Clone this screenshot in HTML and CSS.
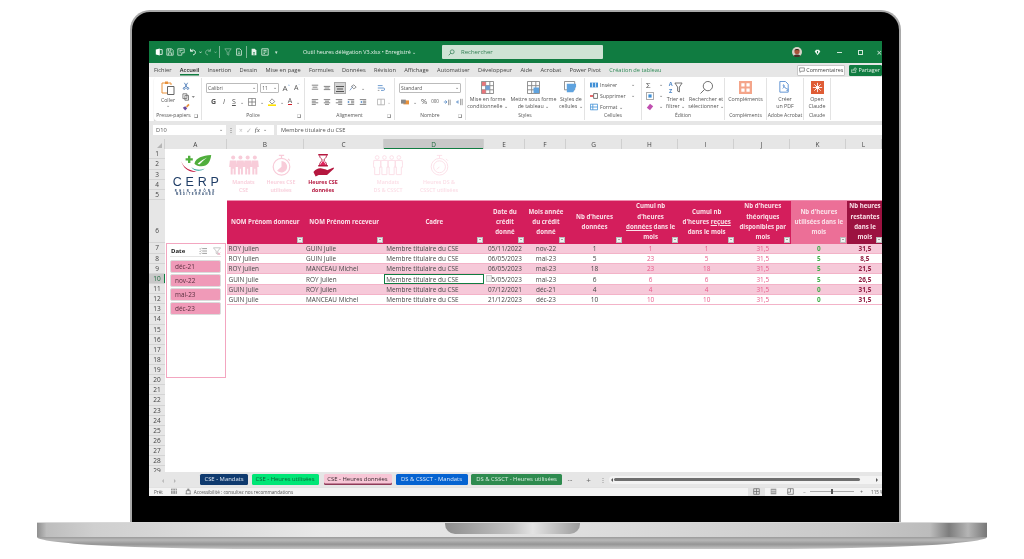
FILE: index.html
```html
<!DOCTYPE html>
<html lang="fr">
<head>
<meta charset="utf-8">
<title>Outil heures délégation V3</title>
<link rel="stylesheet" href="styles.css">
</head>
<body>
<svg class="defs" width="0" height="0" aria-hidden="true">
  <defs>
    <symbol id="persons" viewBox="0 0 36 24">
      <g fill="currentColor">
        <circle cx="5" cy="3" r="2.4"/><path d="M1 6.5h8l.8 8H8v9H5.6v-7h-1.2v7H2v-9H.2z"/>
        <circle cx="13.7" cy="3" r="2.4"/><path d="M9.7 6.5h8l.8 8h-1.8v9h-2.4v-7h-1.2v7h-2.4v-9H8.9z"/>
        <circle cx="22.4" cy="3" r="2.4"/><path d="M18.4 6.5h8l.8 8h-1.8v9H23v-7h-1.2v7h-2.4v-9h-1.8z"/>
        <circle cx="31" cy="3" r="2.4"/><path d="M27 6.5h8l.8 8H34v9h-2.4v-7h-1.2v7H28v-9h-1.8z"/>
      </g>
    </symbol>
    <symbol id="personsline" viewBox="0 0 36 24">
      <g fill="none" stroke="currentColor" stroke-width="1.1">
        <circle cx="5" cy="3" r="2.2"/><path d="M1 6.5h8l.8 8H8v9H2v-9H.2z"/>
        <circle cx="13.7" cy="3" r="2.2"/><path d="M9.7 6.5h8l.8 8h-1.8v9h-6v-9H8.9z"/>
        <circle cx="22.4" cy="3" r="2.2"/><path d="M18.4 6.5h8l.8 8h-1.8v9h-6v-9h-1.8z"/>
        <circle cx="31" cy="3" r="2.2"/><path d="M27 6.5h8l.8 8H34v9h-6v-9h-1.8z"/>
      </g>
    </symbol>
    <symbol id="watch" viewBox="0 0 24 26">
      <g fill="none" stroke="currentColor" stroke-width="1.4">
        <circle cx="12" cy="15" r="9.5"/>
        <path d="M9 2h6M12 2v3.5M19.5 6l2 2"/>
      </g>
      <path fill="currentColor" d="M12 8.5a6.5 6.5 0 1 1-5 10.7l5-4.2z"/>
    </symbol>
    <symbol id="watchline" viewBox="0 0 24 26">
      <g fill="none" stroke="currentColor" stroke-width="1">
        <circle cx="12" cy="15" r="9.5"/>
        <circle cx="12" cy="15" r="6.8"/>
        <path d="M9 2h6M12 2v3.5M19.5 6l2 2M12 15l-3 3"/>
      </g>
    </symbol>
    <symbol id="hourglass" viewBox="0 0 24 26">
      <path fill="#b5173f" d="M6 .5h11v1.600H6zM6 13h11v1.600H6z"/>
      <path fill="none" stroke="#b5173f" stroke-width="1" d="M7.500 2.100c0 3.500 3 3.600 3 5.200s-3 2-3 5.700M15.500 2.100c0 3.500-3 3.600-3 5.200s3 2 3 5.700"/>
      <path fill="#e0245e" d="M9 11.500 11.500 8 14 11.500 15 13H8z"/>
      <path fill="#b5173f" d="M.5 21c3-3.500 6-4.800 9.500-4l5 1c1.500.4 1.300 2-.2 2h-4l6-1.300 6-2.700c1-.3 1.500.8.700 1.500L16 24.500H6.500L3 26z"/>
    </symbol>
  </defs>
</svg>

<main class="laptop">
  <section class="lid">
    <div class="screen">

      <header class="titlebar">
        <div class="qat">
          <svg class="qi" viewBox="0 0 10 10"><path fill="#fff" d="M1 2l5-1.500v9L1 8z"/><path fill="none" stroke="#fff" d="M6 2h3v6H6"/></svg>
          <svg class="qi" viewBox="0 0 10 10"><path fill="none" stroke="#cfe6d8" d="M1 1h6l2 2v6H1zM3 1v3h3V1M3 9V6h4v3"/></svg>
          <svg class="qi" viewBox="0 0 10 10"><path fill="none" stroke="#cfe6d8" d="M1 1h8v5H6v3H1zM3 3h4M3 5h2"/></svg>
          <svg class="qi" viewBox="0 0 10 10"><path fill="none" stroke="#fff" stroke-width="1.100" d="M2 1v3h3M2 4c2-2.500 6-1.500 6 1.500 0 2-1.500 3-3 3"/></svg>
          <span class="caret">⌄</span>
          <svg class="qi dim" viewBox="0 0 10 10"><path fill="none" stroke="#7fb898" stroke-width="1.100" d="M8 1v3H5M8 4C6 1.500 2 2.500 2 5.500c0 2 1.500 3 3 3"/></svg>
          <span class="caret dimcaret">⌄</span>
          <i class="qsep"></i>
          <svg class="qi dim" viewBox="0 0 10 10"><path fill="none" stroke="#7fb898" d="M1 1h8L6 5v4L4 8V5z"/></svg>
          <svg class="qi" viewBox="0 0 10 10"><path fill="none" stroke="#e6f2ea" d="M2 1h4l2 2v6H2zM4 5h2M4 7h2"/></svg>
          <i class="qsep"></i>
          <svg class="qi" viewBox="0 0 10 10"><path fill="#e6f2ea" d="M2 1h4l2 2v6H2z"/><path fill="#107c41" d="M4 5h2v1H4zM4 7h2v1H4z"/></svg>
          <svg class="qi" viewBox="0 0 10 10"><path fill="none" stroke="#e6f2ea" d="M1 1h8v8H1zM3 3h4M3 5h4M3 7h2"/></svg>
          <span class="caret small">▾</span>
        </div>
        <div class="doc">Outil heures délégation V3.xlsx • Enregistré ⌄</div>
        <div class="search">
          <svg class="sicon" viewBox="0 0 10 10"><circle cx="6" cy="4" r="2.800" fill="none" stroke="#2f7d51"/><path d="M4 6 1 9" stroke="#2f7d51" stroke-width="1.100"/></svg>
          <span>Rechercher</span>
        </div>
        <div class="winctl">
          <svg class="avatar" viewBox="0 0 10 10"><circle cx="5" cy="5" r="5" fill="#d9d2c8"/><circle cx="5" cy="4.500" r="2.600" fill="#a8543a"/><path d="M1.500 9c1-2 6-2 7 0a5 5 0 0 1-7 0z" fill="#4a3028"/><path d="M2.500 3.500C3 1.500 7 1.500 7.500 3.500 6 2.800 4 2.800 2.500 3.500z" fill="#3a2a22"/></svg>
          <svg class="gem" viewBox="0 0 10 10"><path fill="#e9f4ee" d="M1 3.500 3 1h4l2 2.500L5 9z"/><path fill="#107c41" d="M4.300 3h1.400v3H4.300z"/></svg>
          <span class="minw"></span>
          <span class="maxw"></span>
          <span class="closew">×</span>
        </div>
      </header>

      <nav class="tabsrow">
        <span>Fichier</span><span class="on">Accueil</span><span>Insertion</span><span>Dessin</span><span>Mise en page</span><span>Formules</span><span>Données</span><span>Révision</span><span>Affichage</span><span>Automatiser</span><span>Développeur</span><span>Aide</span><span>Acrobat</span><span>Power Pivot</span><span class="ctx">Création de tableau</span>
        <div class="share">
          <button class="comm"><svg class="shi" viewBox="0 0 10 10"><path fill="none" stroke="#555" d="M1 1.500h8v5.500H4L2 9V7H1z"/></svg>Commentaires</button>
          <button class="part"><svg class="shi" viewBox="0 0 10 10"><path fill="none" stroke="#e6f2ea" d="M1 4v5h7V6M3 6c0-2.500 2-3.500 4-3.500V1l2.500 2.500L7 6V4.500C5 4.500 4 5 3 6z"/></svg>Partager</button>
        </div>
      </nav>

      <section class="ribbon">
        <div class="grp g-clip">
          <div class="gbody clip">
            <div class="big">
              <svg class="paste" viewBox="0 0 14 15"><path fill="none" stroke="#e8913a" d="M1 3h3M7 3h3v2M1 3v10h5"/><path fill="#e8913a" d="M4 1.500h3V4H4z"/><path fill="#fff" stroke="#666" d="M6.500 6.500H13v8H6.500z"/></svg>
              <span>Coller</span><span class="car">⌄</span>
            </div>
            <div class="tools">
              <svg class="ti" viewBox="0 0 10 10"><path fill="none" stroke="#3b6fb0" d="M3 1l3.500 6M7 1 3.500 7"/><circle cx="2.800" cy="8" r="1.200" fill="none" stroke="#3b6fb0"/><circle cx="7.200" cy="8" r="1.200" fill="none" stroke="#3b6fb0"/></svg>
              <svg class="ti wide" viewBox="0 0 16 10"><path fill="#fff" stroke="#666" d="M1 1h5v6H1zM3.500 3H8v6H3.500z"/><path fill="#666" d="M12 4h4l-2 2z"/></svg>
              <svg class="ti" viewBox="0 0 10 10"><path fill="#e8913a" d="M5 4l3-3 1.500 1.500-3 3z"/><path fill="#6b4a9b" d="M1 6l3-2 2.500 2.500L4 9.500z"/></svg>
            </div>
          </div>
          <div class="glabel lpad">Presse-papiers<i class="launch"></i></div>
        </div>

        <div class="grp g-font">
          <div class="gbody rows">
            <div class="r">
              <span class="combo c-font">Calibri<b>⌄</b></span>
              <span class="combo c-size">11<b>⌄</b></span>
              <span class="gl big-a">A<sup>^</sup></span><span class="gl big-a small-a">A<sup>ˇ</sup></span>
            </div>
            <div class="r r2 spread">
              <span class="gl strong">G</span><span class="gl it">I</span><span class="gl un">S</span><span class="car">⌄</span>
              <svg class="ti" viewBox="0 0 10 10"><path fill="none" stroke="#777" d="M.5.500h9v9h-9zM5 .500v9M.5 5h9"/></svg><span class="car">⌄</span>
              <svg class="ti" viewBox="0 0 10 10"><path fill="none" stroke="#777" d="M5 1 8.500 4.500 5 7.500 2 4.500z"/><path fill="#ffe100" d="M0 8h10v2H0z"/></svg><span class="car">⌄</span>
              <span class="gl colA">A</span><span class="car">⌄</span>
            </div>
          </div>
          <div class="glabel">Police<i class="launch"></i></div>
        </div>

        <div class="grp g-align">
          <div class="gbody alignb">
            <div class="rows">
              <div class="r spread">
                <svg class="ti lines" viewBox="0 0 10 10"><path d="M1 1.500h8M2 4h6M1 6.500h8" stroke="#666"/></svg>
                <svg class="ti lines" viewBox="0 0 10 10"><path d="M1 3h8M2 5h6M1 7h8" stroke="#666"/></svg>
                <svg class="ti lines act" viewBox="0 0 10 10"><path d="M1 3.500h8M2 6h6M1 8.500h8" stroke="#555"/></svg>
                <svg class="ti" viewBox="0 0 10 10"><path d="M1 8 5 3" stroke="#6b8fc0"/><path d="M3 3 6 1l3 3-3 2z" fill="none" stroke="#777"/></svg><span class="car">⌄</span>
              </div>
              <div class="r r2 spread">
                <svg class="ti lines" viewBox="0 0 10 10"><path d="M1 2h8M1 4h5M1 6h8M1 8h5" stroke="#666"/></svg>
                <svg class="ti lines" viewBox="0 0 10 10"><path d="M1 2h8M2.500 4h5M1 6h8M2.500 8h5" stroke="#666"/></svg>
                <svg class="ti lines" viewBox="0 0 10 10"><path d="M1 2h8M4 4h5M1 6h8M4 8h5" stroke="#666"/></svg>
                <svg class="ti lines" viewBox="0 0 10 10"><path d="M1 2h8M5 4h4M5 6h4M1 8h8" stroke="#666"/><path d="M1 3.500 3.500 5 1 6.500z" fill="#4b84c4"/></svg>
                <svg class="ti lines" viewBox="0 0 10 10"><path d="M1 2h8M5 4h4M5 6h4M1 8h8" stroke="#666"/><path d="M4 3.500 1.500 5 4 6.500z" fill="#4b84c4"/></svg>
              </div>
            </div>
            <div class="rows side">
              <div class="r"><svg class="ti" viewBox="0 0 10 10"><path d="M1 2h6M1 5h7a1.500 1.500 0 0 1 0 3H5" fill="none" stroke="#4b84c4"/><path d="M1 8h2" stroke="#888"/></svg></div>
              <div class="r r2"><svg class="ti" viewBox="0 0 10 10"><path fill="none" stroke="#aaa" d="M.5 1.500h9v7h-9zM5 1.500v7"/></svg><span class="car dimc">⌄</span></div>
            </div>
          </div>
          <div class="glabel">Alignement<i class="launch"></i></div>
        </div>

        <div class="grp g-num">
          <div class="gbody rows">
            <div class="r"><span class="combo c-num">Standard<b>⌄</b></span></div>
            <div class="r r2 spread">
              <svg class="ti" viewBox="0 0 10 10"><path fill="#e8913a" d="M3 3h7v5H3z"/><path fill="#888" d="M0 2h6v5H0z"/></svg><span class="car">⌄</span>
              <span class="gl pct">%</span>
              <span class="gl k000">000</span>
              <svg class="ti" viewBox="0 0 10 10"><path d="M1 5h3M3 3l2 2-2 2" fill="none" stroke="#4b84c4"/><path d="M7 2v7M9 2v7" stroke="#888"/></svg>
              <svg class="ti" viewBox="0 0 10 10"><path d="M5 5H2M4 3 2 5l2 2" fill="none" stroke="#4b84c4"/><path d="M7 1v8M9 1v8" stroke="#888"/></svg>
            </div>
          </div>
          <div class="glabel">Nombre<i class="launch"></i></div>
        </div>

        <div class="grp g-style">
          <div class="gbody cols3">
            <div class="btn w-a">
              <svg class="large" viewBox="0 0 14 14"><path fill="#fff" stroke="#888" d="M.5.500h13v13H.5zM5 .500v13M9.500.500v13M.5 5h13M.5 9.500h13"/><path fill="#e9757a" d="M1 1h4v4H1zM1 9.500h4v4H1z"/><path fill="#6f9fd6" d="M5 5h4.500v4.500H5z"/></svg>
              <span>Mise en forme<br>conditionnelle ⌄</span>
            </div>
            <div class="btn w-b">
              <svg class="large" viewBox="0 0 14 14"><path fill="#fff" stroke="#888" d="M.5.500h13v13H.5zM5 .500v13M9.500.500v13M.5 5h13M.5 9.500h13"/><path fill="#5fa3df" d="M7 7h6v6H7z"/></svg>
              <span>Mettre sous forme<br>de tableau ⌄</span>
            </div>
            <div class="btn w-c">
              <svg class="large" viewBox="0 0 14 14"><path fill="#fff" stroke="#888" d="M.5.500h11v9H.5z"/><path fill="#5fa3df" d="M3 3h10v3l-3 6H3z"/></svg>
              <span>Styles de<br>cellules ⌄</span>
            </div>
          </div>
          <div class="glabel">Styles</div>
        </div>

        <div class="grp g-cell">
          <div class="gbody stack">
            <div class="li"><svg class="ti" viewBox="0 0 10 10"><path fill="#3f8fd6" d="M0 2h10v6H0z"/><path d="M3 2v6M7 2v6" stroke="#fff"/></svg>Insérer<b>⌄</b></div>
            <div class="li"><svg class="ti" viewBox="0 0 10 10"><path fill="#e0464a" d="M0 4h4v2H0z"/><path fill="none" stroke="#555" d="M4.500 2h5v6h-5z"/></svg>Supprimer<b>⌄</b></div>
            <div class="li"><svg class="ti" viewBox="0 0 10 10"><path fill="none" stroke="#3f8fd6" d="M.5 1.500h9v7h-9zM3.500 1.500v7M.5 5h9"/></svg>Format ⌄</div>
          </div>
          <div class="glabel">Cellules</div>
        </div>

        <div class="grp g-edit">
          <div class="gbody editb">
            <div class="stack s2">
              <div class="li"><span class="sigma">Σ</span><b>⌄</b></div>
              <div class="li"><svg class="ti" viewBox="0 0 10 10"><path fill="#fff" stroke="#888" d="M.5.500h9v9h-9z"/><path fill="#3f8fd6" d="M3 3h4v4H3z"/></svg><b>⌄</b></div>
              <div class="li"><svg class="ti" viewBox="0 0 10 10"><path fill="#c04fb0" d="M1 6l4-5 4 3-4 5z"/></svg><b>⌄</b></div>
            </div>
            <div class="btn w-d">
              <div class="sortic"><span class="az">A<br>Z</span><svg class="funnel" viewBox="0 0 10 12"><path d="M1 1h8L6 5.500V11L4 10V5.500z" fill="none" stroke="#666"/></svg></div>
              <span>Trier et<br>filtrer ⌄</span>
            </div>
            <div class="btn w-e">
              <svg class="large" viewBox="0 0 14 14"><circle cx="8.500" cy="5.500" r="5" fill="none" stroke="#666"/><path d="M5 9 .5 13.500" stroke="#666"/></svg>
              <span>Rechercher et<br>sélectionner ⌄</span>
            </div>
          </div>
          <div class="glabel">Édition</div>
        </div>

        <div class="grp g-comp">
          <div class="gbody cols3">
            <div class="btn">
              <svg class="large" viewBox="0 0 14 14"><path fill="#f4a58a" d="M0 0h14v14H0z"/><path fill="#fff" d="M2.500 2.500h3.500v3.500H2.500zM8 2.500h3.500v3.500H8zM2.500 8h3.500v3.500H2.500zM8 8h3.500v3.500H8z"/></svg>
              <span>Compléments</span>
            </div>
          </div>
          <div class="glabel">Compléments</div>
        </div>

        <div class="grp g-pdf">
          <div class="gbody cols3">
            <div class="btn">
              <svg class="large" viewBox="0 0 14 14"><path fill="#fff" stroke="#5a8fd0" d="M2 .5h6l3 3V12H2z"/><path fill="none" stroke="#5a8fd0" d="M5 8c2-1 2-4 1-4s0 3 3 4 2 3 0 2"/></svg>
              <span>Créer<br>un PDF</span>
            </div>
          </div>
          <div class="glabel">Adobe Acrobat</div>
        </div>

        <div class="grp g-claude">
          <div class="gbody cols3">
            <div class="btn">
              <svg class="large" viewBox="0 0 14 14"><path fill="#df5c35" d="M0 0h14v14H0z"/><g stroke="#fff" stroke-width=".9"><path d="M7 2v10M2 7h10M3.500 3.500l7 7M10.500 3.500l-7 7"/></g><circle cx="7" cy="7" r="2" fill="#fff"/></svg>
              <span>Open<br>Claude</span>
            </div>
          </div>
          <div class="glabel">Claude</div>
        </div>
      </section>

      <div class="formula">
        <div class="namebox">D10<b>⌄</b></div>
        <span class="dots">⋮</span>
        <div class="fxbox"><span class="fxx">×</span><span class="fxx">✓</span><em>fx</em><b>⌄</b></div>
        <div class="finput">Membre titulaire du CSE</div>
      </div>

      <div class="colheads">
        <div class="corner"><i></i></div>
        <div class="ch a">A</div><div class="ch b">B</div><div class="ch c">C</div><div class="ch d sel">D</div><div class="ch e">E</div><div class="ch f">F</div><div class="ch g">G</div><div class="ch h">H</div><div class="ch i">I</div><div class="ch j">J</div><div class="ch k">K</div><div class="ch l">L</div>
      </div>

      <div class="sheet">
        <div class="rownums">
          <div>1</div><div>2</div><div>3</div><div>4</div><div>5</div><div class="tall">6</div><div>7</div><div>8</div><div>9</div><div class="sel">10</div><div>11</div><div>12</div><div>13</div><div>14</div><div>15</div><div>16</div><div>17</div><div>18</div><div>19</div><div>20</div><div>21</div><div>22</div><div>23</div><div>24</div><div>25</div><div>26</div><div>27</div><div>28</div><div>29</div>
        </div>

        <div class="cola">
          <div class="logo">
            <svg class="logomark" viewBox="0 0 40 24">
              <path fill="#4fae3c" d="M18 13c2-8 10-10 21-11-1 9-5 15-14 14-3 0-5-1-7-3z"/>
              <path fill="#fff" d="M22 13c4-4 8-6 12-8-4 3-7 6-10 9z"/>
              <path fill="#4fae3c" d="M10 3h3v3h3v3h-3v3h-3V9H7V6h3z"/>
              <path fill="#c61f45" d="M1 8c2 8 8 13 20 15-9 1-17-3-20-15z"/>
              <path fill="#2fa39a" d="M14 17c3 3 10 5 17 2-5 4-13 4-17-2z"/>
            </svg>
            <div class="cerp">CERP</div>
            <div class="cerpsub one">RHIN RHÔNE</div>
            <div class="cerpsub two">MÉDITERRANÉE</div>
          </div>
          <aside class="slicer">
            <div class="slhead">
              <strong>Date</strong>
              <svg class="slicon" viewBox="0 0 10 10"><path d="M4 2h6M4 5h6M4 8h6" stroke="#888"/><path d="M.5 2l1 1L3 1M.5 5l1 1L3 4M.5 8l1 1L3 7" fill="none" stroke="#888" stroke-width=".7"/></svg>
              <svg class="slicon" viewBox="0 0 10 10"><path d="M.5 1h9L6 5v4L4 8V5z" fill="none" stroke="#bbb"/><path d="M6 7l3 3M9 7l-3 3" stroke="#e9a0b8"/></svg>
            </div>
            <div class="slbtn">déc-21</div>
            <div class="slbtn">nov-22</div>
            <div class="slbtn">mai-23</div>
            <div class="slbtn">déc-23</div>
          </aside>
        </div>

        <div class="main">
          <div class="banner">
            <div class="bi"><svg class="ic ic-w pale" aria-hidden="true"><use href="#persons"/></svg><span class="pale">Mandats<br>CSE</span></div>
            <div class="bi"><svg class="ic pale" aria-hidden="true"><use href="#watch"/></svg><span class="pale">Heures CSE<br>utilisées</span></div>
            <div class="bi"><svg class="ic" aria-hidden="true"><use href="#hourglass"/></svg><span class="act">Heures CSE<br>données</span></div>
            <div class="bi far"><svg class="ic ic-w pale2" aria-hidden="true"><use href="#personsline"/></svg><span class="pale2">Mandats<br>DS &amp; CSSCT</span></div>
            <div class="bi"><svg class="ic pale2" aria-hidden="true"><use href="#watchline"/></svg><span class="pale2">Heures DS &amp;<br>CSSCT utilisées</span></div>
          </div>

          <table class="data">
            <colgroup>
              <col class="w-b1"><col class="w-c1"><col class="w-d1"><col class="w-e1"><col class="w-f1"><col class="w-n"><col class="w-n"><col class="w-n"><col class="w-n"><col class="w-n"><col class="w-l1">
            </colgroup>
            <thead>
              <tr>
                <th>NOM Prénom donneur<i class="fb"></i></th>
                <th>NOM Prénom receveur<i class="fb"></i></th>
                <th>Cadre<i class="fb"></i></th>
                <th>Date du<br>crédit<br>donné<i class="fb"></i></th>
                <th>Mois année<br>du crédit<br>donné<i class="fb"></i></th>
                <th>Nb d'heures<br>données<i class="fb"></i></th>
                <th>Cumul nb<br>d'heures<br><u>données</u> dans le<br>mois<i class="fb"></i></th>
                <th>Cumul nb<br>d'heures <u>reçues</u><br>dans le mois<i class="fb"></i></th>
                <th>Nb d'heures<br>théoriques<br>disponibles par<br>mois<i class="fb"></i></th>
                <th class="hk">Nb d'heures<br>utilisées dans le<br>mois<i class="fb"></i></th>
                <th class="hl">Nb heures<br>restantes<br>dans le<br>mois<i class="fb"></i></th>
              </tr>
            </thead>
            <tbody>
              <tr><td>ROY Julien</td><td>GUIN Julie</td><td>Membre titulaire du CSE</td><td class="ctr">05/11/2022</td><td class="ctr">nov-22</td><td class="ctr num">1</td><td class="ctr pk">1</td><td class="ctr pk">1</td><td class="ctr pk">31,5</td><td class="ctr gr">0</td><td class="ctr rs">31,5</td></tr>
              <tr><td>ROY Julien</td><td>GUIN Julie</td><td>Membre titulaire du CSE</td><td class="ctr">06/05/2023</td><td class="ctr">mai-23</td><td class="ctr num">5</td><td class="ctr pk">23</td><td class="ctr pk">5</td><td class="ctr pk">31,5</td><td class="ctr gr">5</td><td class="ctr rs">8,5</td></tr>
              <tr><td>ROY Julien</td><td>MANCEAU Michel</td><td>Membre titulaire du CSE</td><td class="ctr">06/05/2023</td><td class="ctr">mai-23</td><td class="ctr num">18</td><td class="ctr pk">23</td><td class="ctr pk">18</td><td class="ctr pk">31,5</td><td class="ctr gr">5</td><td class="ctr rs">21,5</td></tr>
              <tr><td>GUIN Julie</td><td>ROY Julien</td><td class="active">Membre titulaire du CSE</td><td class="ctr dropcell">05/05/2023<i class="dd"></i></td><td class="ctr">mai-23</td><td class="ctr num">6</td><td class="ctr pk">6</td><td class="ctr pk">6</td><td class="ctr pk">31,5</td><td class="ctr gr">5</td><td class="ctr rs">26,5</td></tr>
              <tr><td>GUIN Julie</td><td>ROY Julien</td><td>Membre titulaire du CSE</td><td class="ctr">07/12/2021</td><td class="ctr">déc-21</td><td class="ctr num">4</td><td class="ctr pk">4</td><td class="ctr pk">4</td><td class="ctr pk">31,5</td><td class="ctr gr">0</td><td class="ctr rs">31,5</td></tr>
              <tr><td>GUIN Julie</td><td>MANCEAU Michel</td><td>Membre titulaire du CSE</td><td class="ctr">21/12/2023</td><td class="ctr">déc-23</td><td class="ctr num">10</td><td class="ctr pk">10</td><td class="ctr pk">10</td><td class="ctr pk">31,5</td><td class="ctr gr">0</td><td class="ctr rs">31,5</td></tr>
            </tbody>
          </table>
        </div>
      </div>

      <div class="sheettabs">
        <div class="tabnav"><span>‹</span><span>›</span></div>
        <div class="tab navy">CSE - Mandats</div>
        <div class="tab mint">CSE - Heures utilisées</div>
        <div class="tab cur">CSE - Heures données</div>
        <div class="tab blue">DS &amp; CSSCT - Mandats</div>
        <div class="tab dgreen">DS &amp; CSSCT - Heures utilisées</div>
        <span class="more">···</span>
        <span class="plus">+</span>
        <span class="vd">⋮</span>
        <div class="hscroll"><i class="arr l"></i><i class="thumb"></i><i class="arr r"></i></div>
      </div>

      <footer class="status">
        <span>Prêt</span>
        <svg class="st" viewBox="0 0 10 10"><path fill="#999" d="M0 1h10v8H0z"/><path stroke="#eee" d="M0 4h10M3 1v8M7 1v8"/></svg>
        <svg class="st" viewBox="0 0 10 10"><path fill="none" stroke="#666" d="M1 9h8M2 9V4h6v5M5 1v3M3 2h4"/></svg>
        <span class="acc">Accessibilité : consultez nos recommandations</span>
        <div class="views">
          <span class="vw on"><svg viewBox="0 0 10 10"><path fill="none" stroke="#666" d="M1 1h8v8H1zM1 5h8M5 1v8"/></svg></span>
          <span class="vw"><svg viewBox="0 0 10 10"><path fill="#999" d="M1 1h8v8H1z"/><path stroke="#eee" d="M2 3.500h6M2 6h6"/></svg></span>
          <span class="vw"><svg viewBox="0 0 10 10"><path fill="none" stroke="#666" d="M1 1h8v8H1zM1 6h4V1"/></svg></span>
          <span class="zm">−</span>
          <span class="zoomline"><i></i></span>
          <span class="zm">+</span>
          <span class="pctz">115 %</span>
        </div>
      </footer>
    </div>
  </section>

  <section class="base">
    <div class="deck"><div class="notch"></div></div>
    <div class="lip"></div>
  </section>
</main>
</body>
</html>
```

FILE: styles.css
```css
* { box-sizing: border-box; }
html, body { margin: 0; padding: 0; background: #fff; }
body { width: 1024px; height: 559px; overflow: hidden; font-family: "Open Sans", "Noto Sans", sans-serif; color: #444; }
.defs { display: block; height: 0; }

.laptop { display: flex; flex-direction: column; align-items: flex-start; padding-top: 10px; }

/* lid */
.lid {
  width: 771px; height: 512px; margin-left: 130px; background: #000;
  border: 2px solid #a9a9a9; border-bottom: 0; border-radius: 20px 20px 0 0;
  padding: 29px 17px 26px 17px;
}
.screen { width: 733px; height: 455px; background: #fff; display: flex; flex-direction: column; overflow: hidden; filter: blur(.4px); }

/* title bar */
.titlebar { flex: 0 0 22px; background: #107c41; display: flex; align-items: center; color: #e6f2ea; font-size: 5.4px; padding-left: 6px; }
.qat { display: flex; align-items: center; gap: 3.2px; width: 149px; }
.qi { width: 8px; height: 8px; flex: none; }
.caret { font-size: 6px; width: 3px; color: #cfe6d8; margin: -3px 0 0 -2px; }
.dimcaret { color: #7fb898; }
.caret.small { margin: 0 0 0 3px; font-size: 5px; }
.qsep { width: 1px; height: 12px; background: #7fb898; flex: none; }
.doc { width: 140px; white-space: nowrap; }
.search { width: 162px; height: 14px; background: #cfe3d5; border-radius: 1px; display: flex; align-items: center; gap: 6px; padding-left: 6px; color: #2f7d51; font-size: 6px; }
.sicon { width: 7px; height: 7px; }
.winctl { flex: 1; display: flex; align-items: center; padding-left: 189px; }
.avatar { width: 10px; height: 10px; flex: none; }
.gem { width: 7px; height: 7px; flex: none; margin-left: 12px; }
.minw { width: 5px; height: 1px; background: #cfe6d8; margin-left: 16px; flex: none; }
.maxw { width: 5px; height: 5px; border: 1px solid #cfe6d8; margin-left: 16px; flex: none; }
.closew { margin-left: 14px; font-size: 9px; color: #cfe6d8; line-height: 1; }

/* ribbon tabs */
.tabsrow { flex: 0 0 14px; background: #e6e6e6; display: flex; align-items: center; gap: 8.300px; padding-left: 5px; font-size: 5.7px; color: #444; white-space: nowrap; }
.tabsrow .on { color: #222; box-shadow: 0 1.5px 0 #107c41; font-weight: 600; }
.tabsrow .ctx { color: #2e8b57; }
.share { margin-left: auto; display: flex; gap: 4px; height: 11px; }
.share button { font: inherit; font-size: 5.4px; padding: 0; border: 1px solid #c8c8c8; background: #fff; color: #444; border-radius: 1px; display: flex; align-items: center; justify-content: center; gap: 1.5px; }
.shi { width: 6px; height: 6px; flex: none; }
.comm { width: 48px; }
.share .part { width: 33px; background: #107c41; border-color: #107c41; color: #e6f2ea; }

/* ribbon */
.ribbon { flex: 0 0 44px; margin-left: 5px; background: #fff; border-radius: 3px 0 0 3px; display: flex; font-size: 5.2px; color: #555; box-shadow: 0 1px 1px #bbb; }
.grp { display: flex; flex-direction: column; border-right: 1px solid #e3e3e3; margin: 1px 0; }
.g-clip { width: 48px; } .g-font { width: 103px; } .g-align { width: 90px; } .g-num { width: 71px; } .g-style { width: 119px; }
.g-cell { width: 57px; } .g-edit { width: 83px; } .g-comp { width: 42px; } .g-pdf { width: 37px; } .g-claude { width: 27px; }
.gbody { flex: 1; min-height: 0; display: flex; }
.glabel { flex: 0 0 9px; text-align: center; font-size: 5px; color: #555; position: relative; line-height: 9px; white-space: nowrap; }
.lpad { padding-right: 8px; }
.launch { position: absolute; right: 3px; top: 2.5px; width: 4px; height: 4px; border: 1px solid #999; border-top-color: #ddd; border-left-color: #ddd; }

.clip { padding: 2px 0 0 6px; gap: 6px; }
.big { display: flex; flex-direction: column; align-items: center; width: 16px; line-height: 1; }
.paste { width: 14px; height: 15px; margin-bottom: 3px; }
.big .car { font-size: 5px; }
.tools { display: flex; flex-direction: column; gap: 2.5px; padding-top: 2px; }
.ti { width: 8px; height: 8px; flex: none; }
.ti.wide { width: 13px; }
.car { font-size: 5px; color: #666; }
.dimc { color: #bbb; }

.rows { display: flex; flex-direction: column; padding: 4px 4px 0 4px; gap: 0; flex: 1; }
.r { display: flex; align-items: center; gap: 2px; height: 11px; }
.r2 { margin-top: 3px; }
.spread { gap: 4px; padding-left: 2px; }
.combo { height: 10px; border: 1px solid #bbb; border-radius: 1px; display: flex; align-items: center; justify-content: space-between; padding: 0 1px; font-size: 5px; background: #fff; }
.combo b { font-weight: 400; font-size: 5px; margin-top: -2px; }
.c-font { width: 54px; } .c-size { width: 19px; } .c-num { width: 64px; }
.gl { font-size: 7px; color: #555; line-height: 1; }
.big-a { font-size: 8px; margin-left: 2px; }
.big-a sup { font-size: 4px; color: #4b84c4; }
.small-a { font-size: 7px; }
.strong { font-weight: 700; margin-left: 3px; }
.it { font-style: italic; margin-left: 3px; }
.un { text-decoration: underline; margin-left: 3px; }
.colA { border-bottom: 1.5px solid #d21f2b; font-size: 7px; line-height: .95; }
.pct { font-size: 7.5px; } .k000 { font-size: 4.5px; }

.alignb { display: flex; }
.alignb > .rows { flex: none; width: 68px; }
.alignb > .side { width: 20px; }
.lines.act { background: #d4d4d4; outline: 1px solid #a9a9a9; width: 10px; height: 10px; }

.cols3 { justify-content: space-around; flex: 1; }
.btn { display: flex; flex-direction: column; align-items: center; text-align: center; line-height: 7px; font-size: 5.3px; padding-top: 3px; white-space: nowrap; }
.large { width: 13px; height: 13px; margin-bottom: 2px; flex: none; }
.sortic { display: flex; align-items: center; gap: 1px; height: 13px; margin-bottom: 2px; }
.az { font-size: 5.6px; line-height: 6.4px; font-weight: 700; color: #4b84c4; }
.funnel { width: 9px; height: 11px; }
.stack { display: flex; flex-direction: column; gap: 3.4px; padding: 2.5px 0 0 5px; flex: 1; }
.li { display: flex; align-items: center; gap: 2px; height: 8px; font-size: 5.2px; }
.li b { font-weight: 400; margin: -2px 0 0 auto; padding-right: 6px; }
.editb { display: flex; }
.s2 { flex: none; width: 21px; padding-left: 4px; }
.s2 .li b { padding-right: 0; }
.sigma { font-size: 8px; line-height: 1; }
.w-d { width: 26px; } .w-e { width: 37px; }

/* formula bar */
.formula { flex: 0 0 18px; background: #e6e6e6; display: flex; align-items: flex-start; padding: 4px 0 0 4px; font-size: 5.7px; color: #555; margin-top: 0; }
.namebox { width: 73px; height: 10px; background: #fff; display: flex; justify-content: space-between; align-items: center; padding: 0 3px; }
.namebox b, .fxbox b { font-weight: 400; font-size: 5px; margin-top: -2px; }
.dots { width: 10px; text-align: center; line-height: 10px; }
.fxbox { width: 38px; height: 10px; background: #fff; display: flex; align-items: center; gap: 3px; padding: 0 3px; }
.fxx { color: #bbb; font-size: 6.5px; }
.fxbox em { font-family: "Liberation Serif", serif; font-size: 7px; }
.finput { flex: 1; height: 10px; background: #fff; margin-left: 3px; padding-left: 4px; line-height: 10px; }

/* column headers */
.colheads { flex: 0 0 10px; display: flex; background: #e6e6e6; font-size: 6.5px; color: #444; }
.colheads > div { display: flex; align-items: center; justify-content: center; border-right: 1px solid #cfcfcf; }
.corner { width: 16px; position: relative; }
.corner i { position: absolute; right: 2px; bottom: 1px; border-style: solid; border-width: 0 0 5px 5px; border-color: transparent transparent #b5b5b5 transparent; }
.ch.a { width: 61.5px; } .ch.b { width: 77.5px; } .ch.c { width: 80px; } .ch.d { width: 100px; } .ch.e, .ch.f { width: 41px; }
.ch.g, .ch.h, .ch.i, .ch.j, .ch.k { width: 56px; } .ch.l { width: 36px; }
.ch.sel { background: #c8c8c8; box-shadow: inset 0 -1px 0 #107c41; color: #1e6b3f; }

/* sheet */
.sheet { flex: 1; min-height: 0; display: flex; overflow: hidden; background: #fff; }
.rownums { flex: 0 0 16px; background: #e6e6e6; font-size: 6.5px; color: #444; text-align: center; }
.rownums > div { height: 10.15px; line-height: 10.15px; border-bottom: 1px solid #d4d4d4; }
.rownums > .tall { height: 43.4px; line-height: 62px; }
.rownums > .sel { background: #c8c8c8; color: #1e6b3f; box-shadow: inset -1px 0 0 #107c41; }
.cola { flex: 0 0 61.5px; display: flex; flex-direction: column; align-items: flex-start; }
.logo { height: 94.1px; width: 100%; display: flex; flex-direction: column; align-items: center; padding-top: 4px; }
.logomark { width: 32px; height: 20px; margin-left: 1px; flex: none; }
.cerp { font-family: "Liberation Sans", sans-serif; font-size: 12.5px; line-height: 10px; letter-spacing: 3.8px; margin-right: -3.8px; color: #1f3d66; margin-top: 4px; }
.cerpsub { font-family: "Liberation Sans", sans-serif; font-size: 2.7px; line-height: 3.2px; color: #1f3d66; font-weight: 700; white-space: nowrap; }
.cerpsub.one { letter-spacing: 2.5px; margin-top: 3px; }
.cerpsub.two { letter-spacing: 1.5px; }

.slicer { width: 60px; height: 135px; border: 1px solid #f3a6c0; background: #fff; margin-left: 1px; padding: 2px 4px 0 3px; display: flex; flex-direction: column; }
.slhead { display: flex; align-items: center; height: 11px; border-bottom: 1px solid #e5e5e5; font-size: 6px; color: #222; margin-bottom: 2.5px; padding-left: 1px; }
.slhead strong { flex: 1; }
.slicon { width: 8px; height: 8px; margin-left: 6px; }
.slbtn { height: 13px; margin-bottom: 1px; background: #f09ab8; border: 1px solid #dcdcdc; border-radius: 2px; font-size: 6.4px; line-height: 11px; padding-left: 4px; color: #5a3040; flex: none; }

.main { flex: 1; min-width: 0; }
.banner { height: 50.25px; display: flex; align-items: flex-start; padding-top: 4px; }
.bi { display: flex; flex-direction: column; align-items: center; font-size: 5.3px; line-height: 8px; font-weight: 600; text-align: center; white-space: nowrap; }
.bi:nth-child(1) { width: 34px; } .bi:nth-child(2) { width: 41px; } .bi:nth-child(3) { width: 43px; } .bi:nth-child(4) { width: 60px; margin-left: 13.5px; } .bi:nth-child(5) { width: 42px; }
.ic { width: 21px; height: 24px; margin-bottom: 1px; }
.ic-w { width: 30px; }
.pale { color: #f8ccd9; }
.pale2 { color: #fbdde6; }
.bi .act { color: #b5173f; font-weight: 700; }

.data { border-collapse: collapse; table-layout: fixed; width: 656.5px; font-size: 6.4px; color: #444; }
.w-b1 { width: 77.5px; } .w-c1 { width: 80px; } .w-d1 { width: 100px; } .w-e1, .w-f1 { width: 41px; } .w-n { width: 56px; } .w-l1 { width: 36px; }
.data th { height: 43.5px; background: #d41e5c; color: #fbe3ea; font-weight: 700; font-size: 6.1px; line-height: 10.300px; text-align: center; padding: 0; position: relative; border-top: 1px solid #ee8fb0; white-space: nowrap; }
.data th.hk { background: #ec6f97; }
.data th.hl { background: #9c1240; }
.fb { position: absolute; right: 1px; bottom: 1px; width: 6px; height: 6px; background: #f0f0f0; border: 1px solid #bbb; }
.fb::after { content: ""; position: absolute; left: 1px; top: 1.5px; border-style: solid; border-width: 1.5px 1px 0; border-color: #555 transparent transparent; }
.data td { height: 10.15px; padding: 0 0 0 2px; line-height: 9px; white-space: nowrap; overflow: hidden; border-bottom: 1px solid #f3b3c8; }
.data tbody tr:nth-child(odd) td { background: #f6c9d9; }
.data td.ctr { text-align: center; padding: 0; }
.data td.num { font-size: 6.6px; }
.data td.pk { color: #e85a8a; }
.data td.gr { color: #3fae48; font-weight: 700; }
.data td.rs { color: #8e1a3f; font-weight: 700; }
.data td.active { outline: 1px solid #107c41; outline-offset: -1px; }
.dropcell { position: relative; }
.dd { position: absolute; left: 2px; top: 1px; width: 6px; height: 7px; background: #eee; border: 1px solid #ccc; }

/* sheet tabs */
.sheettabs { flex: 0 0 15px; background: #e6e6e6; display: flex; align-items: center; font-size: 5.9px; white-space: nowrap; }
.tabnav { width: 51px; display: flex; gap: 9px; padding-left: 13px; color: #888; font-size: 8px; }
.tab { height: 10.5px; line-height: 10px; text-align: center; border-radius: 1.5px; margin-right: 3.500px; }
.navy { width: 48px; background: #0f3a6e; color: #dfe7f2; }
.mint { width: 67px; background: #00e676; color: #0f5c34; margin-right: 5px; }
.cur { width: 68px; background: #f7c6d6; color: #3a2a30; box-shadow: inset 0 -1.5px 0 #8e3a58; margin-right: 4px; }
.blue { width: 72px; background: #0563d1; color: #dfeafa; }
.dgreen { width: 91px; background: #2e8b4f; color: #d8ecdf; }
.more { width: 11px; margin-left: 2px; color: #666; font-weight: 700; }
.plus { width: 14px; margin-left: 3px; text-align: center; color: #666; font-size: 8px; }
.vd { width: 8px; text-align: center; margin-left: 3px; color: #777; }
.hscroll { flex: 1; margin-left: 2px; height: 8px; background: #f3f3f3; border-radius: 4px 0 0 4px; display: flex; align-items: center; padding: 0 2px 0 2px; }
.arr { width: 0; height: 0; border-style: solid; border-width: 2px 2.500px; }
.arr.l { border-color: transparent #555 transparent transparent; margin-left: -2px; }
.arr.r { border-color: transparent transparent transparent #555; }
.thumb { flex: 1; height: 3.500px; background: #6e6e6e; border-radius: 2px; margin: 0 16px 0 1px; }

/* status bar */
.status { flex: 0 0 9px; background: #f3f3f3; display: flex; align-items: center; font-size: 4.6px; color: #555; padding-left: 5px; box-shadow: inset 0 1px 0 #e2e2e2; }
.st { width: 6.500px; height: 6.500px; margin-left: 8px; }
.status .acc { margin-left: 2px; white-space: nowrap; }
.views { margin-left: auto; display: flex; align-items: center; height: 100%; }
.vw { width: 17px; height: 100%; display: flex; align-items: center; justify-content: center; }
.vw.on { background: #e2e2e2; }
.vw svg { width: 7px; height: 7px; }
.zm { width: 7px; text-align: center; margin-left: 2px; }
.zoomline { width: 44px; height: 1px; background: #aaa; position: relative; margin: 0 2px; }
.zoomline i { position: absolute; left: 21px; top: -2px; width: 2px; height: 5px; background: #555; }
.pctz { margin-left: 6px; width: 11px; overflow: hidden; white-space: nowrap; }

/* base */
.base { width: 950px; margin-left: 37px; display: flex; flex-direction: column; }
.deck {
  height: 15px; display: flex; justify-content: center;
  background: linear-gradient(90deg, #8f8f8f 0, #bdbdbd 1%, #cfcfcf 6%, #e8e8e8 30%, #e0e0e0 55%, #c9c9c9 85%, #bcbcbc 94%, #7d7d7d 96%, #b5b5b5 98%, #777 100%);
  border-top: 1px solid #d8d8d8;
}
.notch { width: 135px; height: 11px; border-radius: 0 0 10px 10px; background: linear-gradient(90deg, #8d8d8d, #c3c3c3 50%, #e3e3e3 65%, #9c9c9c); }
.lip {
  height: 12px; border-radius: 0 0 220px 220px / 0 0 12px 12px;
  background: linear-gradient(180deg, #9a9a9a 0, #b8b8b8 25%, #959595 60%, #c6c6c6 100%);
}
```
